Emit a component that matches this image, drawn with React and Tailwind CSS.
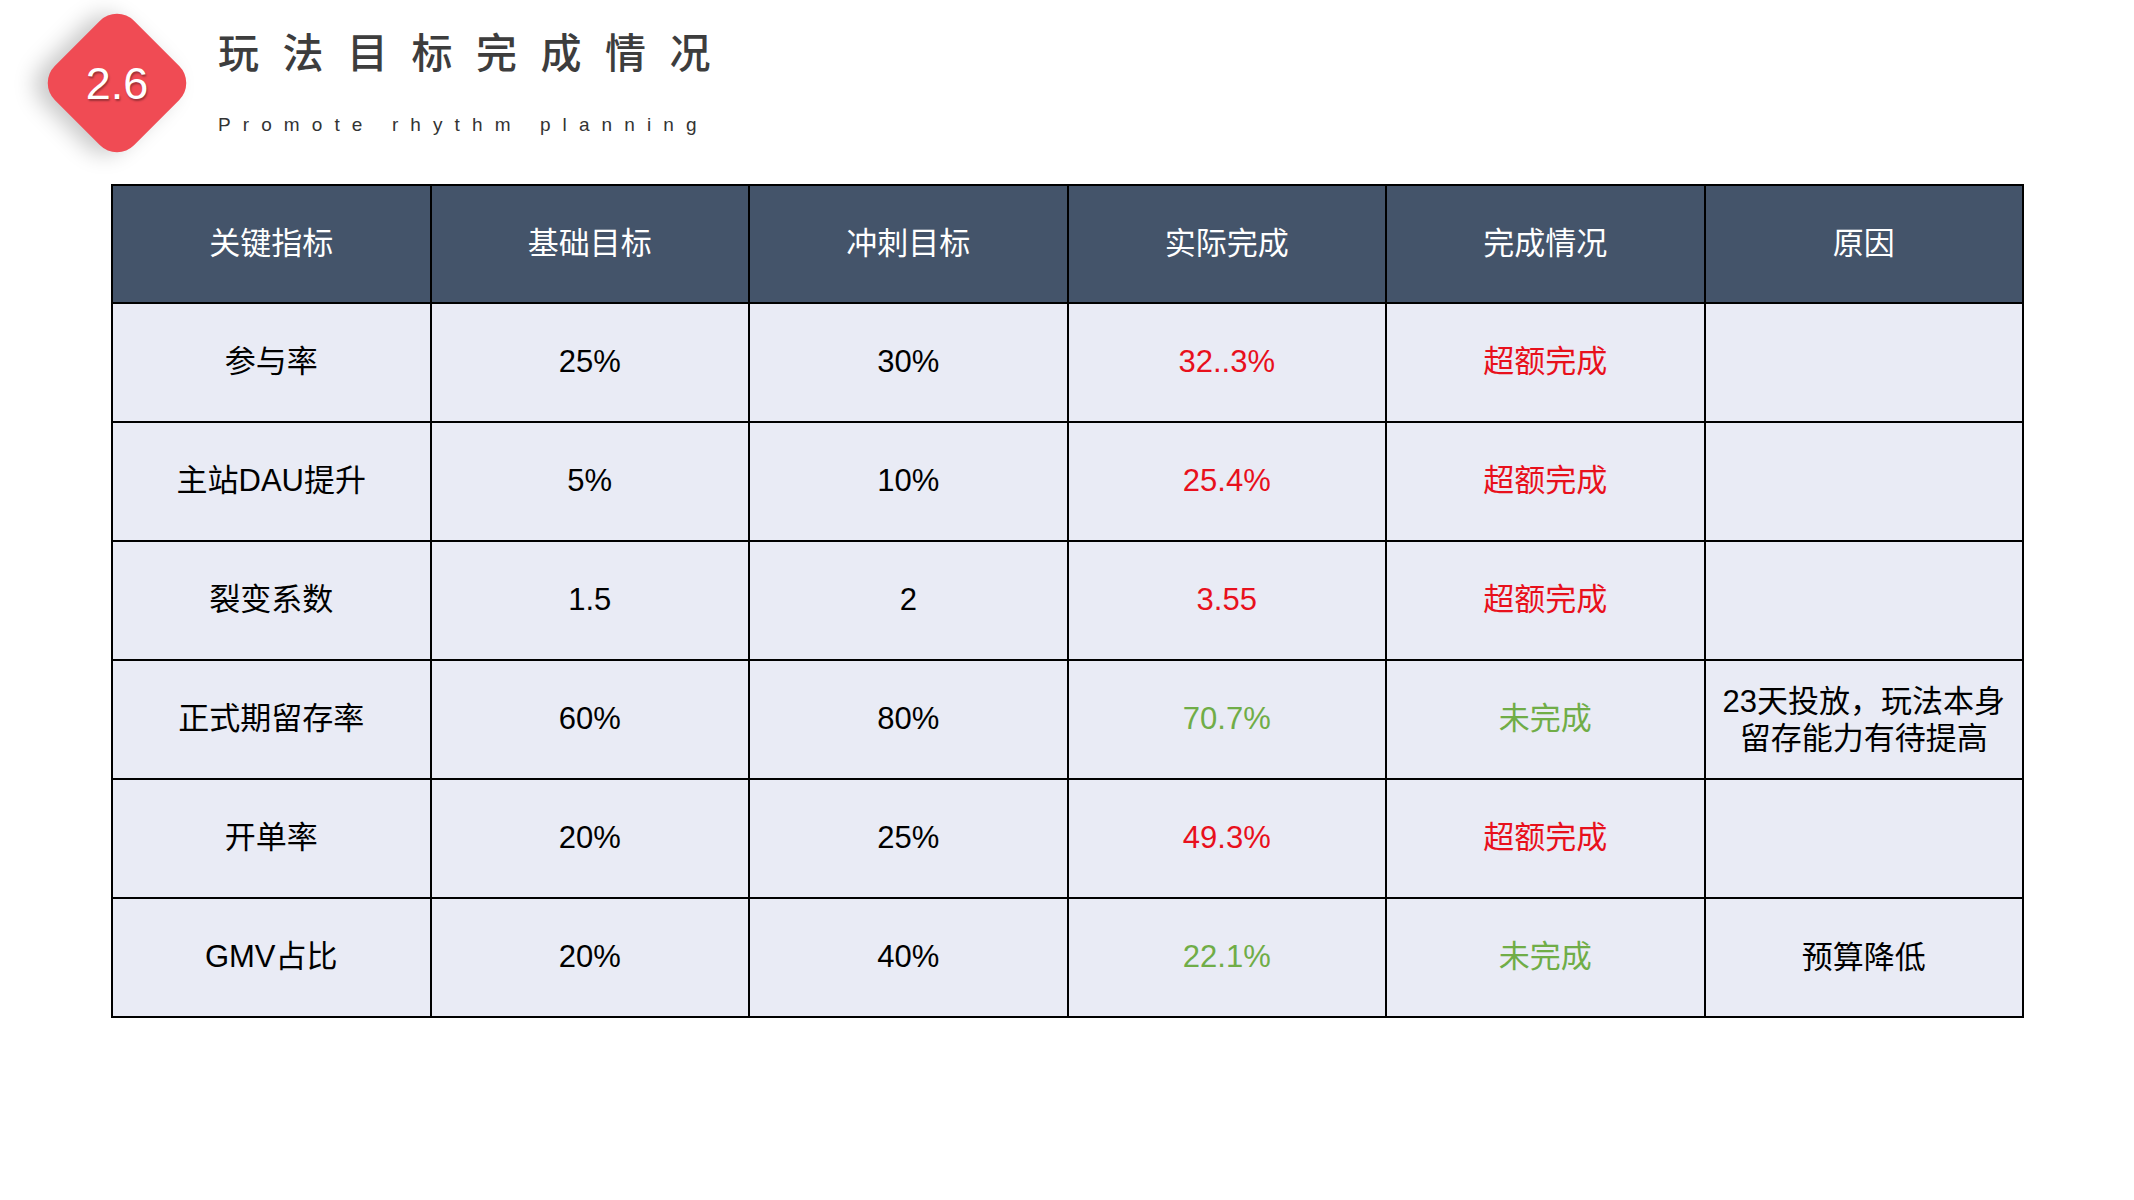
import React from 'react';

const FONT = '"Liberation Sans", "Noto Sans CJK SC", sans-serif';

const rows = [
    { name: '参与率', base: '25%', sprint: '30%', actual: '32..3%', status: '超额完成', ok: true, reason: '' },
    { name: '主站DAU提升', base: '5%', sprint: '10%', actual: '25.4%', status: '超额完成', ok: true, reason: '' },
    { name: '裂变系数', base: '1.5', sprint: '2', actual: '3.55', status: '超额完成', ok: true, reason: '' },
    { name: '正式期留存率', base: '60%', sprint: '80%', actual: '70.7%', status: '未完成', ok: false, reason: ['23天投放，玩法本身', '留存能力有待提高'] },
    { name: '开单率', base: '20%', sprint: '25%', actual: '49.3%', status: '超额完成', ok: true, reason: '' },
    { name: 'GMV占比', base: '20%', sprint: '40%', actual: '22.1%', status: '未完成', ok: false, reason: '预算降低' },
];

const headers = ['关键指标', '基础目标', '冲刺目标', '实际完成', '完成情况', '原因'];

const App = () => {
    return (
        <div className="w-[2134px] h-[1200px] bg-white overflow-hidden" style={{ fontFamily: FONT }}>
            {/* 标题 */}
            <div className="h-[184px] flex items-start pl-[47px] pt-[13px]">
                <div className="w-[140px] h-[140px] grid place-items-center">
                    <div className="col-start-1 row-start-1 w-[112px] h-[112px] rotate-45 rounded-[24px] bg-[#f04b54] shadow-[-8px_10px_22px_rgba(0,0,0,0.22)]"></div>
                    <span className="relative col-start-1 row-start-1 text-white text-[45px] leading-none [text-shadow:1px_2px_2px_rgba(0,0,0,0.35)]">2.6</span>
                </div>
                <div className="ml-[31px] mt-[17px]">
                    <div className="text-[41px] leading-[48px] tracking-[23.5px] text-[#3d3d3d] font-medium">玩法目标完成情况</div>
                    <div className="mt-[35px] text-[19px] leading-[24px] tracking-[12.1px] text-[#333]">Promote rhythm planning</div>
                </div>
            </div>

            {/* 表格 */}
            <table className="ml-[111px] w-[1913px] table-fixed border-collapse border-2 border-black text-[31px]">
                <thead>
                    <tr className="h-[118px] bg-[#44546a]">
                        {headers.map(h => (
                            <th key={h} className="border-2 border-black font-normal text-white text-center align-middle">{h}</th>
                        ))}
                    </tr>
                </thead>
                <tbody>
                    {rows.map(r => (
                        <tr key={r.name} className="h-[119px] bg-[#e9ebf5]">
                            <td className="border-2 border-black text-center text-black">{r.name}</td>
                            <td className="border-2 border-black text-center text-black">{r.base}</td>
                            <td className="border-2 border-black text-center text-black">{r.sprint}</td>
                            <td className={`border-2 border-black text-center ${r.ok ? 'text-[#e8101c]' : 'text-[#70ad47]'}`}>{r.actual}</td>
                            <td className={`border-2 border-black text-center ${r.ok ? 'text-[#e8101c]' : 'text-[#70ad47]'}`}>{r.status}</td>
                            <td className="border-2 border-black text-center text-black leading-[37px]">
                                {Array.isArray(r.reason)
                                    ? r.reason.map(line => <div key={line} className="whitespace-nowrap">{line}</div>)
                                    : r.reason}
                            </td>
                        </tr>
                    ))}
                </tbody>
            </table>
        </div>
    );
};

export default App;
